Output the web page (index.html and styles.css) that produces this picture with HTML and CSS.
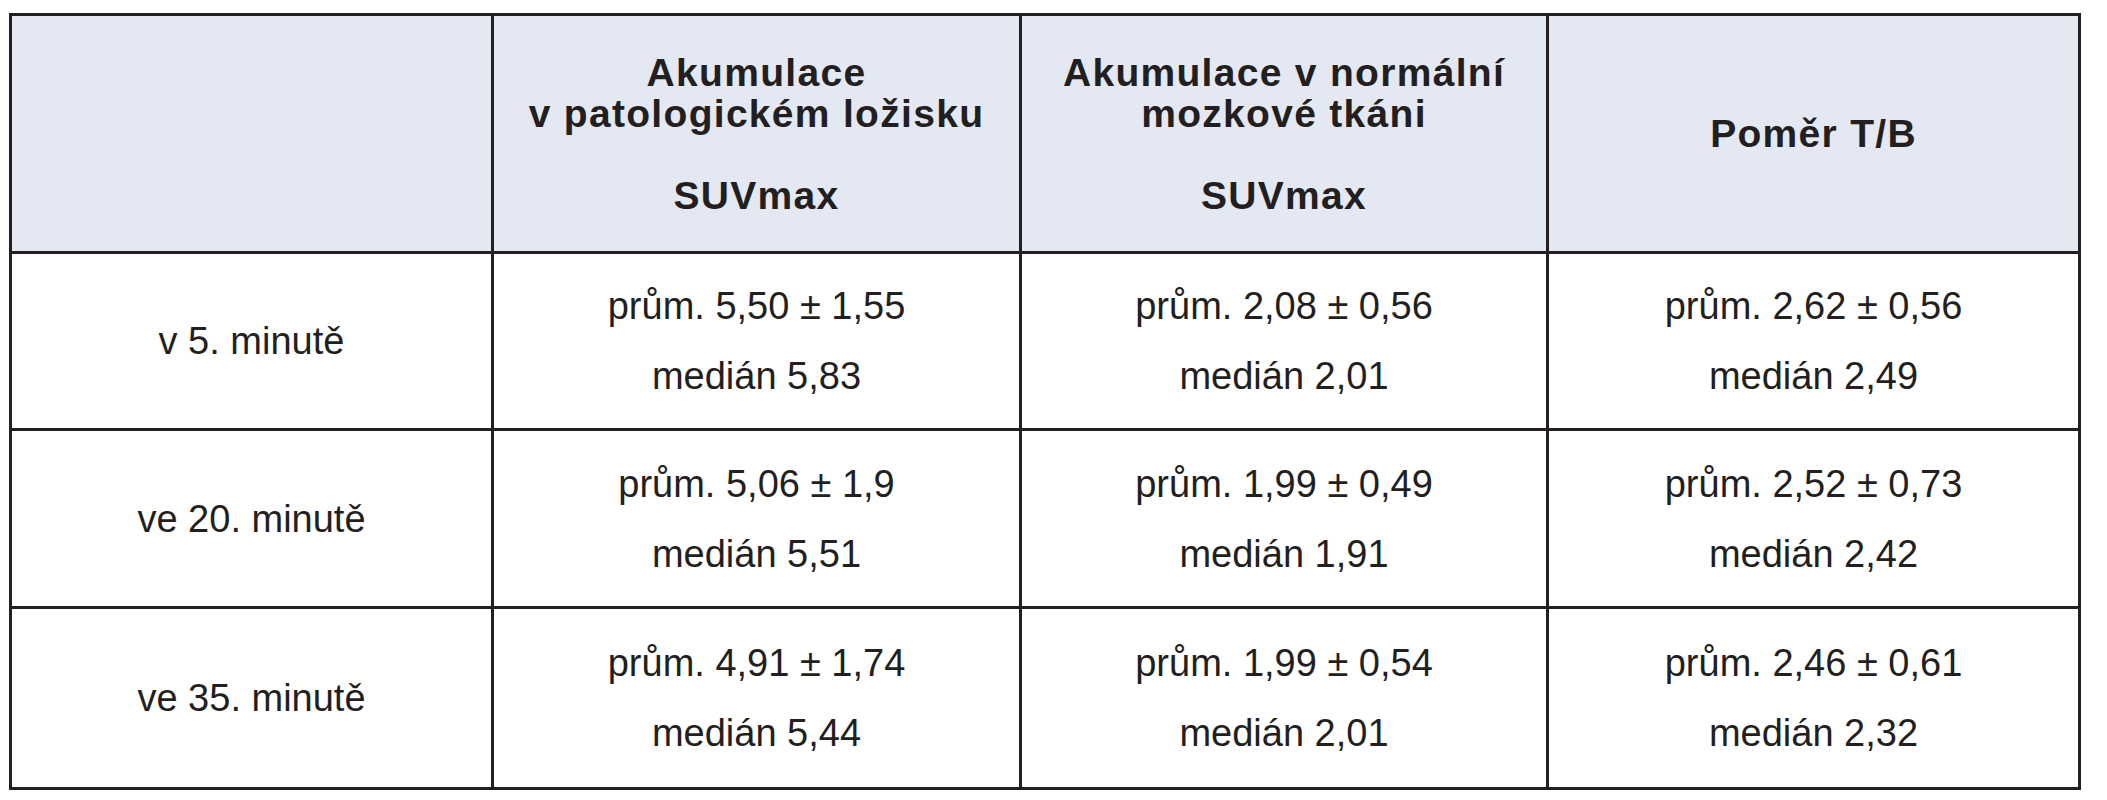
FILE: index.html
```html
<!DOCTYPE html>
<html lang="cs">
<head>
<meta charset="utf-8">
<title>Akumulace SUVmax</title>
<link rel="stylesheet" href="styles.css">
</head>
<body>
<div class="table">
  <div class="cell head"></div>
  <div class="cell head">Akumulace<br>v patologickém ložisku<br><br>SUVmax</div>
  <div class="cell head">Akumulace v normální<br>mozkové tkáni<br><br>SUVmax</div>
  <div class="cell head">Poměr T/B</div>

  <div class="cell label">v 5. minutě</div>
  <div class="cell data">prům. 5,50 ± 1,55<br>medián 5,83</div>
  <div class="cell data">prům. 2,08 ± 0,56<br>medián 2,01</div>
  <div class="cell data">prům. 2,62 ± 0,56<br>medián 2,49</div>

  <div class="cell label">ve 20. minutě</div>
  <div class="cell data">prům. 5,06 ± 1,9<br>medián 5,51</div>
  <div class="cell data">prům. 1,99 ± 0,49<br>medián 1,91</div>
  <div class="cell data">prům. 2,52 ± 0,73<br>medián 2,42</div>

  <div class="cell label">ve 35. minutě</div>
  <div class="cell data">prům. 4,91 ± 1,74<br>medián 5,44</div>
  <div class="cell data">prům. 1,99 ± 0,54<br>medián 2,01</div>
  <div class="cell data">prům. 2,46 ± 0,61<br>medián 2,32</div>
</div>
</body>
</html>
```

FILE: styles.css
```css
html, body {
  margin: 0;
  padding: 0;
  background: #ffffff;
}

body {
  font-family: "Liberation Sans", Arial, sans-serif;
  color: #231f20;
}

.table {
  margin: 13px 0 0 9px;
  width: max-content;
  display: grid;
  grid-template-columns: 479px 525px 524px 529px;
  grid-template-rows: 235px 174px 175px 178px;
  gap: 3px;
  padding: 3px;
  background: #231f20;
}

.cell {
  background: #ffffff;
  display: flex;
  align-items: center;
  justify-content: center;
  text-align: center;
}

.head {
  background: #e3e8f2;
  font-weight: bold;
  font-size: 39px;
  line-height: 41px;
  letter-spacing: 1.3px;
}

.label,
.data {
  font-size: 38px;
  line-height: 70px;
}
```
